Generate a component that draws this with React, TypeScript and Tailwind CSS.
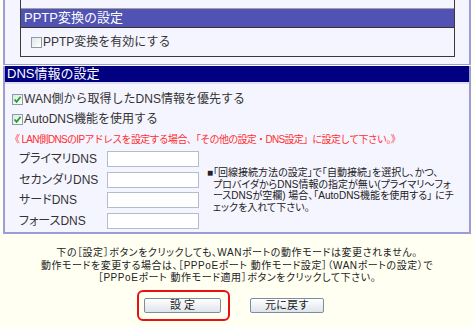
import React from "react";

const font = "font-['Liberation_Sans','Noto_Sans_CJK_JP',sans-serif]";

function Check({ checked }: { checked?: boolean }) {
  return (
    <span className="w-[11px] h-[11px] border border-[#8d9aa8] bg-[linear-gradient(135deg,#e2e6ea,#ffffff)] flex items-center justify-center shrink-0">
      {checked && (
        <svg width="9" height="9" viewBox="0 0 9 9">
          <path d="M1.5 4.5 L3.6 6.8 L7.6 1.8" fill="none" stroke="#21a121" strokeWidth="1.8" />
        </svg>
      )}
    </span>
  );
}

const dnsRows = ["プライマリDNS", "セカンダリDNS", "サードDNS", "フォースDNS"];

const note = [
  "■「回線接続方法の設定」で「自動接続」を選択し、かつ、",
  "プロバイダからDNS情報の指定が無い(プライマリ〜フォ",
  "ースDNSが空欄) 場合、「AutoDNS機能を使用する」 にチ",
  "ェックを入れて下さい。",
];

const notice = [
  "下の［設定］ボタンをクリックしても、WANポートの動作モードは変更されません。",
  "動作モードを変更する場合は、［PPPoEポート 動作モード設定］（WANポートの設定）で",
  "［PPPoEポート 動作モード適用］ボタンをクリックして下さい。",
];

export default function App() {
  return (
    <div className={`w-[474px] h-[327px] overflow-hidden bg-[#fffff2] text-[#222] ${font}`}>
      <div className="px-[3px]">
        {/* PPTP section (continued from above) */}
        <div className="bg-[#f5f5ff] border-x-2 border-b border-[#9c9cd8] pl-[15px] pr-[14px] pb-[7px]">
          <div className="border-x border-b border-[#3a3a3a] bg-[#f5f5ff]">
            <div className="h-[8px]" />
            <div className="border-t border-[#a0a0a0] border-b border-b-[#333] bg-[#5052b4] h-[20px] flex items-center px-[3px] text-white text-[13px]">
              PPTP変換の設定
            </div>
            <div className="h-[28px] flex items-center pl-[10px] gap-[1px] text-[12px] text-[#333]">
              <Check />
              <span>PPTP変換を有効にする</span>
            </div>
          </div>
        </div>

        {/* DNS section */}
        <div className="mt-[1px] bg-[#f5f5ff] border-x-2 border-b-2 border-[#9c9cd8]">
          <div className="bg-[#000080] h-[18px] flex items-center px-[2px] text-white text-[13px] border-b-2 border-[#e0e0f0]">
            DNS情報の設定
          </div>
          <div className="pt-[5px] text-[12px] text-[#333]">
            <div className="h-[20px] flex items-center pl-[7px] gap-[1px]">
              <Check checked />
              <span>WAN側から取得したDNS情報を優先する</span>
            </div>
            <div className="h-[20px] flex items-center pl-[7px] gap-[1px]">
              <Check checked />
              <span>AutoDNS機能を使用する</span>
            </div>
            <div className="h-[20px] flex items-center pl-[5px] text-[10px] text-[#ff3030] tracking-[-0.7px] whitespace-nowrap">
              《 LAN側DNSのIPアドレスを設定する場合、「その他の設定・DNS設定」に設定して下さい。》
            </div>
            <div className="flex items-center pb-[1px]">
              <div className="flex flex-col pl-[14px]">
                {dnsRows.map((r) => (
                  <div key={r} className="h-[20.5px] flex items-center">
                    <span className="w-[88px] text-[12px] [font-feature-settings:'palt']">{r}</span>
                    <span className="w-[92px] h-[16px] border border-[#b4bccb] bg-white" />
                  </div>
                ))}
              </div>
              <div className="ml-[8px] text-[10px] whitespace-nowrap text-[#222] [font-feature-settings:'palt']">
                {note.map((l, i) => (
                  <div key={i} className={`h-[11.5px] leading-[11.5px] ${i > 0 ? "pl-[6px]" : ""}`}>
                    {l}
                  </div>
                ))}
              </div>
            </div>
          </div>
        </div>
      </div>

      {/* bottom notice */}
      <div className="pt-[13px] text-center text-[10px] text-[#222] tracking-[0.55px] [font-feature-settings:'palt']">
        {notice.map((l, i) => (
          <div key={i} className="h-[12.5px] leading-[12.5px] whitespace-nowrap">
            {l}
          </div>
        ))}
      </div>
      <div className="flex justify-center items-center gap-[20px] mt-[5px] pr-[13px]">
        <div className="flex border-2 border-[#e81010] rounded-[6px] pl-[5px] pr-[7px] py-[6px]">
          <button className="w-[77px] h-[15px] border border-[#7e8ca0] rounded-[2px] bg-[linear-gradient(#ffffff,#dfe4ec)] text-[11px] leading-none tracking-[3px] pl-[3px] text-[#222]">
            設定
          </button>
        </div>
        <button className="w-[74px] h-[15px] border border-[#7e8ca0] rounded-[2px] bg-[linear-gradient(#ffffff,#dfe4ec)] text-[11px] leading-none text-[#222]">
          元に戻す
        </button>
      </div>
    </div>
  );
}
